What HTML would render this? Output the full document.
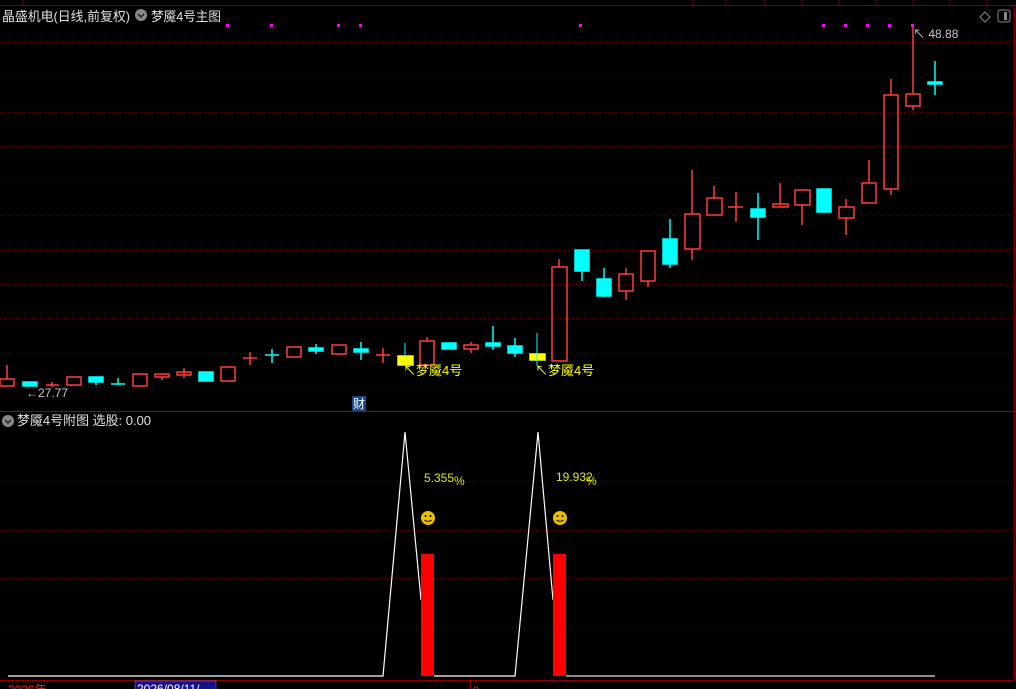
<!DOCTYPE html>
<html><head><meta charset="utf-8"><style>
html,body{margin:0;padding:0;background:#000;width:1016px;height:689px;overflow:hidden}
svg{display:block}
text{font-family:"Liberation Sans","Noto Sans CJK SC",sans-serif}
</style></head><body>
<svg width="1016" height="689" viewBox="0 0 1016 689" xmlns="http://www.w3.org/2000/svg">
<rect width="1016" height="689" fill="#000"/>
<line x1="0" y1="5.5" x2="1016" y2="5.5" stroke="#800000" stroke-width="1"/>
<g stroke="#800000"><line x1="23" y1="0" x2="23" y2="5"/><line x1="693" y1="0" x2="693" y2="5"/><line x1="726" y1="0" x2="726" y2="5"/><line x1="765" y1="0" x2="765" y2="5"/><line x1="802" y1="0" x2="802" y2="5"/><line x1="839" y1="0" x2="839" y2="5"/><line x1="876" y1="0" x2="876" y2="5"/><line x1="913" y1="0" x2="913" y2="5"/><line x1="950" y1="0" x2="950" y2="5"/><line x1="987" y1="0" x2="987" y2="5"/></g>
<line x1="1014.5" y1="5" x2="1014.5" y2="680" stroke="#800000"/>
<g stroke="#700000" stroke-dasharray="1,3" stroke-width="1">
<line x1="0" y1="42.5" x2="1014" y2="42.5"/><line x1="0" y1="77.5" x2="1014" y2="77.5"/><line x1="0" y1="112.5" x2="1014" y2="112.5"/><line x1="0" y1="146.5" x2="1014" y2="146.5"/><line x1="0" y1="181.5" x2="1014" y2="181.5"/><line x1="0" y1="215.5" x2="1014" y2="215.5"/><line x1="0" y1="250.5" x2="1014" y2="250.5"/><line x1="0" y1="284.5" x2="1014" y2="284.5"/><line x1="0" y1="318.5" x2="1014" y2="318.5"/><line x1="0" y1="353.5" x2="1014" y2="353.5"/><line x1="0" y1="387.5" x2="1014" y2="387.5"/>
<line x1="0" y1="481.5" x2="1014" y2="481.5"/><line x1="0" y1="530.5" x2="1014" y2="530.5"/><line x1="0" y1="578.5" x2="1014" y2="578.5"/><line x1="0" y1="627.5" x2="1014" y2="627.5"/>
</g>
<line x1="0" y1="411.5" x2="1014" y2="411.5" stroke="#a00000"/>
<text x="2" y="21" font-size="13" fill="#e0e0e0" textLength="128" lengthAdjust="spacingAndGlyphs">晶盛机电(日线,前复权)</text>
<circle cx="141" cy="15" r="6" fill="#888"/><path d="M138 14 l3 3 l3 -3" stroke="#222" stroke-width="1.5" fill="none"/>
<text x="151" y="21" font-size="13" fill="#e0e0e0" textLength="70" lengthAdjust="spacingAndGlyphs">梦魇4号主图</text>
<path d="M985 12 l5 5 l-5 5 l-5 -5z" stroke="#888" fill="none"/>
<rect x="998" y="10" width="12" height="12" rx="2" stroke="#888" fill="none"/><rect x="1004" y="12" width="3" height="8" fill="#888"/>
<g fill="#ff00ff">
<rect x="226" y="24" width="3" height="3"/><rect x="270" y="24" width="3" height="3"/><rect x="337" y="24" width="3" height="3"/><rect x="359" y="24" width="3" height="3"/><rect x="579" y="24" width="3" height="3"/><rect x="822" y="24" width="3" height="3"/><rect x="844" y="24" width="3" height="3"/><rect x="866" y="24" width="3" height="3"/><rect x="888" y="24" width="3" height="3"/><rect x="911" y="24" width="3" height="3"/>
</g>
<g stroke="#ff3c3c" stroke-width="1.5" fill="none">
<line x1="7" y1="365" x2="7" y2="379"/><rect x="0" y="379" width="14" height="7"/>
<line x1="46" y1="385" x2="59" y2="385"/><line x1="52" y1="382" x2="52" y2="387"/>
<rect x="67" y="377" width="14" height="8"/>
<rect x="133" y="374" width="14" height="12"/>
<rect x="155" y="374" width="14" height="3"/><line x1="162" y1="377" x2="162" y2="380"/>
<rect x="177" y="372" width="14" height="3"/><line x1="184" y1="368" x2="184" y2="378"/>
<rect x="221" y="367" width="14" height="14"/>
<line x1="243" y1="358" x2="257" y2="358"/><line x1="250" y1="352" x2="250" y2="365"/>
<rect x="287" y="347" width="14" height="10"/>
<rect x="332" y="345" width="14" height="9"/>
<line x1="376" y1="355" x2="390" y2="355"/><line x1="383" y1="348" x2="383" y2="363"/>
<rect x="420" y="341" width="14" height="24"/><line x1="427" y1="337" x2="427" y2="341"/>
<rect x="464" y="345" width="14" height="4"/><line x1="471" y1="342" x2="471" y2="345"/><line x1="471" y1="349" x2="471" y2="353"/>
<rect x="552" y="267" width="15" height="94"/><line x1="559" y1="259" x2="559" y2="267"/>
<rect x="619" y="274" width="14" height="17"/><line x1="626" y1="268" x2="626" y2="274"/><line x1="626" y1="291" x2="626" y2="300"/>
<rect x="641" y="251" width="14" height="30"/><line x1="648" y1="281" x2="648" y2="287"/>
<rect x="685" y="214" width="15" height="35"/><line x1="692" y1="170" x2="692" y2="214"/><line x1="692" y1="249" x2="692" y2="260"/>
<rect x="707" y="198" width="15" height="17"/><line x1="714" y1="186" x2="714" y2="198"/>
<line x1="728" y1="207" x2="743" y2="207"/><line x1="736" y1="192" x2="736" y2="222"/>
<rect x="773" y="204" width="15" height="3"/><line x1="780" y1="183" x2="780" y2="204"/>
<rect x="795" y="190" width="15" height="15"/><line x1="802" y1="205" x2="802" y2="225"/>
<rect x="839" y="207" width="15" height="11"/><line x1="846" y1="199" x2="846" y2="207"/><line x1="846" y1="218" x2="846" y2="235"/>
<rect x="862" y="183" width="14" height="20"/><line x1="869" y1="160" x2="869" y2="183"/>
<rect x="884" y="95" width="14" height="94"/><line x1="891" y1="79" x2="891" y2="95"/><line x1="891" y1="189" x2="891" y2="195"/>
<rect x="906" y="94" width="14" height="12"/><line x1="913" y1="27" x2="913" y2="94"/><line x1="913" y1="106" x2="913" y2="110"/>
</g>
<g fill="#00ffff" stroke="#00ffff" stroke-width="1.5">
<rect x="23" y="382" width="14" height="4"/>
<rect x="89" y="377" width="14" height="5"/><line x1="96" y1="382" x2="96" y2="385"/>
<line x1="111" y1="384" x2="125" y2="384"/><line x1="118" y1="378" x2="118" y2="385"/>
<rect x="199" y="372" width="14" height="9"/>
<line x1="265" y1="355" x2="279" y2="355"/><line x1="272" y1="349" x2="272" y2="363"/>
<rect x="309" y="348" width="14" height="3"/><line x1="316" y1="344" x2="316" y2="354"/>
<rect x="354" y="349" width="14" height="3"/><line x1="361" y1="342" x2="361" y2="360"/>
<rect x="442" y="343" width="14" height="6"/>
<rect x="486" y="343" width="14" height="3"/><line x1="493" y1="326" x2="493" y2="350"/>
<rect x="508" y="346" width="14" height="7"/><line x1="515" y1="338" x2="515" y2="357"/>
<rect x="575" y="250" width="14" height="21"/><line x1="582" y1="271" x2="582" y2="281"/>
<rect x="597" y="279" width="14" height="17"/><line x1="604" y1="268" x2="604" y2="297"/>
<rect x="663" y="239" width="14" height="25"/><line x1="670" y1="219" x2="670" y2="268"/>
<rect x="751" y="209" width="14" height="8"/><line x1="758" y1="193" x2="758" y2="240"/>
<rect x="817" y="189" width="14" height="23"/><line x1="824" y1="212" x2="824" y2="213"/>
<rect x="928" y="82" width="14" height="2"/><line x1="935" y1="61" x2="935" y2="95"/>
</g>
<g fill="#ffff00" stroke="#ffff00" stroke-width="1.5">
<rect x="398" y="356" width="15" height="9"/>
<rect x="530" y="354" width="15" height="6"/>
</g>
<line x1="405" y1="343" x2="405" y2="356" stroke="#00ffff"/>
<line x1="537" y1="333" x2="537" y2="366" stroke="#00ffff"/>
<text x="403" y="375" font-size="13" fill="#ffff00">↖梦魇4号</text>
<text x="535" y="375" font-size="13" fill="#ffff00">↖梦魇4号</text>
<text x="26" y="397" font-size="12" fill="#c8c8c8">←27.77</text>
<text x="913" y="38" font-size="12" fill="#c8c8c8">↖ 48.88</text>
<rect x="352" y="396" width="14" height="15" fill="#1a4a8a"/>
<text x="353" y="408" font-size="12" fill="#fff">财</text>
<circle cx="8" cy="421" r="6" fill="#888"/><path d="M5 420 l3 3 l3 -3" stroke="#222" stroke-width="1.5" fill="none"/>
<text x="17" y="425" font-size="13" fill="#e0e0e0" textLength="134" lengthAdjust="spacingAndGlyphs">梦魇4号附图  选股: 0.00</text>
<polyline points="8,676 383,676 405,432 421,600" stroke="#fff" stroke-width="1.2" fill="none"/>
<polyline points="434,676 515,676 538,432 553,600" stroke="#fff" stroke-width="1.2" fill="none"/>
<line x1="566" y1="676" x2="935" y2="676" stroke="#ddd" stroke-width="1.2"/>
<rect x="421" y="554" width="13" height="122" fill="#ff0000"/>
<rect x="553" y="554" width="13" height="122" fill="#ff0000"/>
<text x="424" y="482" font-size="12" fill="#e8e800">5.355</text><text x="454" y="485" font-size="12" fill="#e8e800">%</text>
<text x="556" y="481" font-size="12" fill="#e8e800">19.932</text><text x="586" y="485" font-size="12" fill="#e8e800">%</text>
<g><circle cx="428" cy="518" r="7" fill="#e8c000"/><circle cx="425.5" cy="516" r="1" fill="#000"/><circle cx="430.5" cy="516" r="1" fill="#000"/><path d="M424.5 520 q3.5 3 7 0" stroke="#000" fill="none"/></g>
<g><circle cx="560" cy="518" r="7" fill="#e8c000"/><circle cx="557.5" cy="516" r="1" fill="#000"/><circle cx="562.5" cy="516" r="1" fill="#000"/><path d="M556.5 520 q3.5 3 7 0" stroke="#000" fill="none"/></g>
<line x1="0" y1="680.5" x2="1014" y2="680.5" stroke="#900000"/>
<text x="8" y="694" font-size="12" fill="#ff2020">2026年</text>
<rect x="135" y="681" width="81" height="10" fill="#101090" stroke="#8080ff" stroke-width="0.5"/>
<text x="137" y="693" font-size="12" fill="#fff">2026/08/11/</text>
<line x1="470.5" y1="681" x2="470.5" y2="689" stroke="#900000"/>
<text x="473" y="694" font-size="11" fill="#ff2020">0</text>
</svg>
</body></html>
